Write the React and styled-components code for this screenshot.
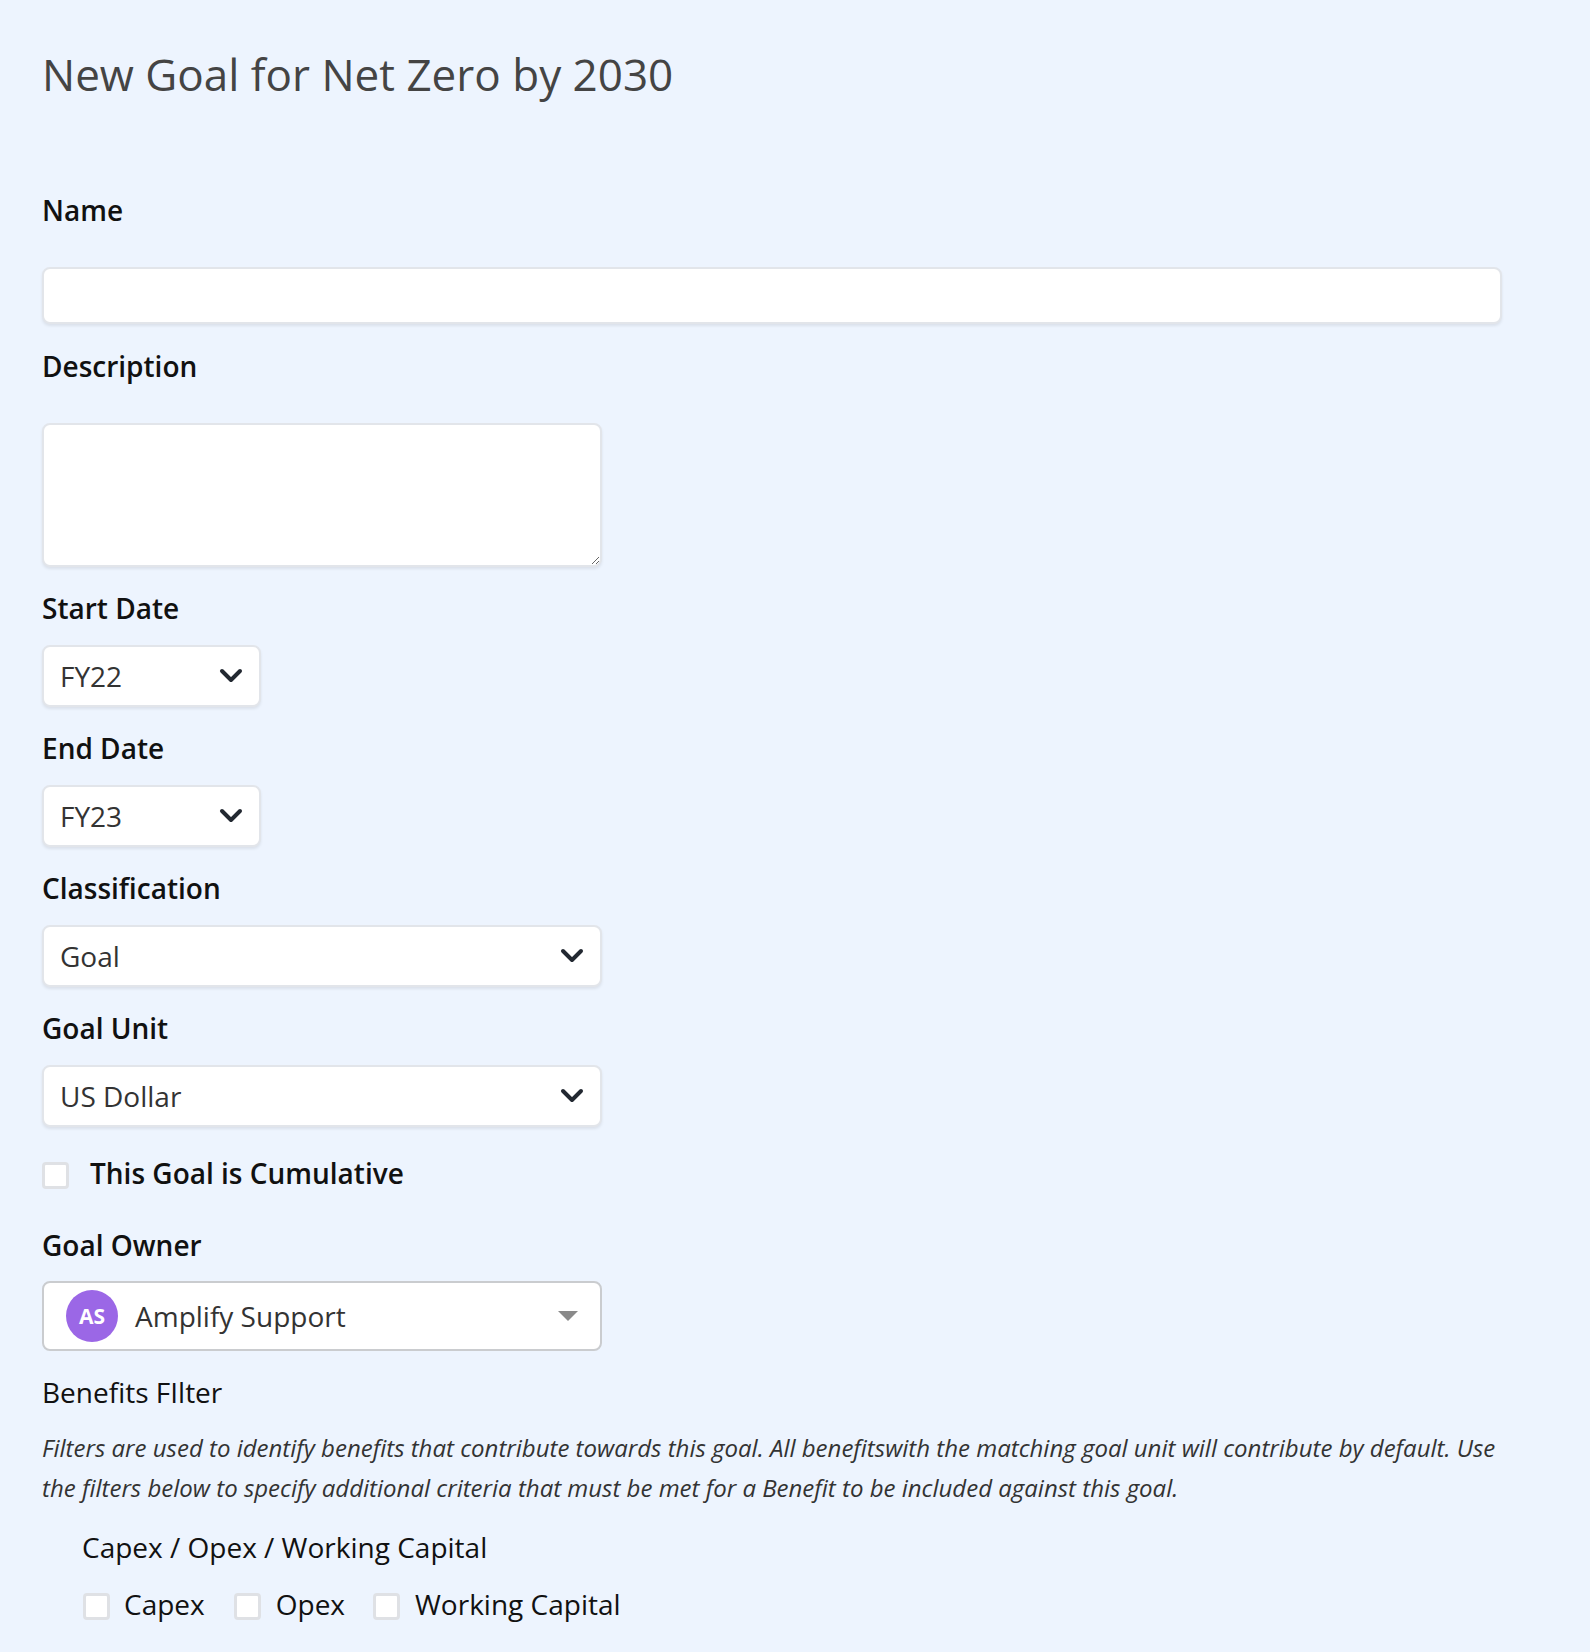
import styled, { createGlobalStyle } from "styled-components";

const GlobalStyle = createGlobalStyle`
  html, body {
    margin: 0;
    padding: 0;
    background: #edf4fe;
  }
  * {
    box-sizing: border-box;
  }
`;

const Page = styled.div`
  font-family: "Open Sans", "Noto Sans", sans-serif;
  min-height: 1652px;
  padding: 48px 42px 0 42px;
  background: #edf4fe;
  display: flex;
  flex-direction: column;
  align-items: flex-start;
`;

const Title = styled.h1`
  margin: 0;
  font-size: 44px;
  line-height: 52px;
  font-weight: 400;
  color: #444;
`;

const Label = styled.label`
  display: block;
  margin-top: ${(p) => p.$top}px;
  font-size: 28px;
  line-height: 34px;
  font-weight: ${(p) => (p.$plain ? 400 : 600)};
  color: #111;
`;

const TextInput = styled.input`
  display: block;
  margin-top: ${(p) => p.$top}px;
  width: 1460px;
  height: 57px;
  border: 2px solid #e2e5ea;
  border-radius: 8px;
  background: #fff;
  box-shadow: 0 2px 3px rgba(0, 0, 0, 0.08);
  outline: none;
  font: inherit;
  font-size: 28px;
  padding: 0 17px;
`;

const TextArea = styled.textarea`
  display: block;
  margin-top: ${(p) => p.$top}px;
  width: 560px;
  height: 144px;
  border: 2px solid #e2e5ea;
  border-radius: 8px;
  background: #fff;
  box-shadow: 0 2px 3px rgba(0, 0, 0, 0.08);
  outline: none;
  font: inherit;
  font-size: 28px;
  padding: 10px 17px;
`;

const SelectBox = styled.div`
  margin-top: ${(p) => p.$top}px;
  width: ${(p) => p.$width}px;
  height: 62px;
  border: 2px solid #e2e5ea;
  border-radius: 8px;
  background: #fff;
  box-shadow: 0 2px 3px rgba(0, 0, 0, 0.08);
  display: flex;
  align-items: center;
  justify-content: space-between;
  padding: 0 16px 0 16px;
  font-size: 28px;
  color: #333;
`;

const CheckRow = styled.div`
  margin-top: ${(p) => p.$top}px;
  margin-left: ${(p) => p.$indent || 0}px;
  display: flex;
  align-items: center;
  font-size: 28px;
  line-height: 34px;
  color: #111;
  font-weight: ${(p) => (p.$bold ? 600 : 400)};
`;

const Box = styled.span`
  width: 27px;
  height: 27px;
  margin-top: 4px;
  flex-shrink: 0;
  background: #fff;
  border: 3px solid #dfe1e5;
  border-radius: 4px;
  margin-right: ${(p) => p.$after}px;
`;

const CheckText = styled.span`
  margin-right: ${(p) => p.$after || 0}px;
`;

const OwnerSelect = styled.div`
  margin-top: ${(p) => p.$top}px;
  width: 560px;
  height: 70px;
  border: 2px solid #cacccf;
  border-radius: 8px;
  background: #fff;
  display: flex;
  align-items: center;
  padding: 0 22px 0 22px;
  font-size: 28px;
  color: #333;
`;

const Avatar = styled.span`
  width: 52px;
  height: 52px;
  border-radius: 50%;
  background: #9b67e6;
  color: #fff;
  font-weight: 700;
  font-size: 21px;
  display: flex;
  align-items: center;
  justify-content: center;
  margin-right: 17px;
  flex-shrink: 0;
`;

const OwnerName = styled.span`
  flex: 1;
`;

const Caret = styled.span`
  width: 0;
  height: 0;
  border-left: 10px solid transparent;
  border-right: 10px solid transparent;
  border-top: 10px solid #8a8a8a;
`;

const Help = styled.p`
  margin: ${(p) => p.$top}px 0 0 0;
  width: 1460px;
  font-size: 24px;
  line-height: 40px;
  font-style: italic;
  color: #333;
`;

const Heading = styled.div`
  margin-top: ${(p) => p.$top}px;
  margin-left: 40px;
  font-size: 28px;
  line-height: 34px;
  color: #111;
`;

function Chevron() {
  return (
    <svg width="24" height="16" viewBox="0 0 24 16">
      <polyline
        points="3,3 12,12 21,3"
        fill="none"
        stroke="#222831"
        strokeWidth="4"
        strokeLinecap="round"
        strokeLinejoin="round"
      />
    </svg>
  );
}

function Select({ value, width, top }) {
  return (
    <SelectBox $width={width} $top={top}>
      <span>{value}</span>
      <Chevron />
    </SelectBox>
  );
}

export default function App() {
  return (
    <Page>
      <GlobalStyle />
      <Title>New Goal for Net Zero by 2030</Title>

      <Label $top={93}>Name</Label>
      <TextInput $top={40} />

      <Label $top={25}>Description</Label>
      <TextArea $top={40} />

      <Label $top={24}>Start Date</Label>
      <Select value="FY22" width={219} top={20} />

      <Label $top={24}>End Date</Label>
      <Select value="FY23" width={219} top={20} />

      <Label $top={24}>Classification</Label>
      <Select value="Goal" width={560} top={20} />

      <Label $top={24}>Goal Unit</Label>
      <Select value="US Dollar" width={560} top={20} />

      <CheckRow $top={29} $bold>
        <Box $after={21} />
        <CheckText>This Goal is Cumulative</CheckText>
      </CheckRow>

      <Label $top={38}>Goal Owner</Label>
      <OwnerSelect $top={19}>
        <Avatar>AS</Avatar>
        <OwnerName>Amplify Support</OwnerName>
        <Caret />
      </OwnerSelect>

      <Label $top={24} $plain>
        Benefits FIlter
      </Label>
      <Help $top={19}>
        Filters are used to identify benefits that contribute towards this
        goal. All benefitswith the matching goal unit will contribute by
        default. Use the filters below to specify additional criteria that
        must be met for a Benefit to be included against this goal.
      </Help>

      <Heading $top={22}>Capex / Opex / Working Capital</Heading>
      <CheckRow $top={23} $indent={41}>
        <Box $after={14} />
        <CheckText $after={29}>Capex</CheckText>
        <Box $after={15} />
        <CheckText $after={28}>Opex</CheckText>
        <Box $after={15} />
        <CheckText>Working Capital</CheckText>
      </CheckRow>
    </Page>
  );
}
